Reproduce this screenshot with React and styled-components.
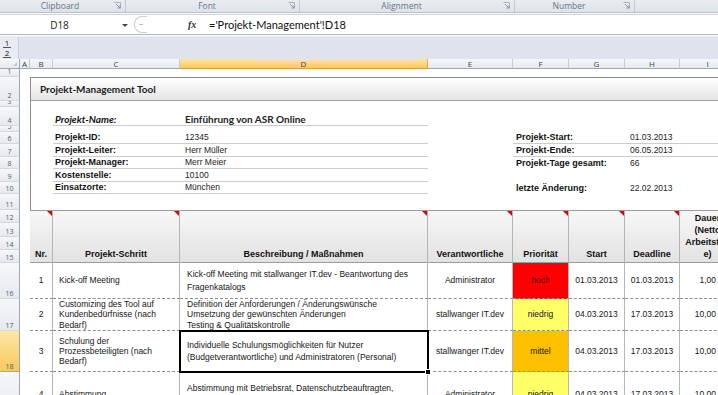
import React from 'react';
import styled, { createGlobalStyle, css } from 'styled-components';

const GlobalStyle = createGlobalStyle`
  html, body {
    margin: 0;
    padding: 0;
    background: #fff;
  }
  body {
    font-family: 'Liberation Sans', Arial, sans-serif;
    overflow: hidden;
  }
`;

const COLS = [20, 10, 23, 127, 248, 85, 56, 56, 55, 56];
const ROWS = [10, 8, 24, 6, 19, 6, 12, 13, 12, 13, 12, 16, 13, 14, 13, 13, 36, 32, 41, 46];
const LETTERS = ['A', 'B', 'C', 'D', 'E', 'F', 'G', 'H', 'I'];

const PRIO = {
  hoch: '#ff0000',
  niedrig: '#ffff66',
  mittel: '#ffc000',
};

const place = css`
  grid-column: ${(p) => p.$c};
  grid-row: ${(p) => p.$r};
`;

const Window = styled.div`
  width: 718px;
  height: 395px;
  overflow: hidden;
  display: flex;
  flex-direction: column;
  background: #fff;
`;

/* ribbon group captions */
const RibbonFoot = styled.div`
  display: flex;
  flex-shrink: 0;
  height: 12px;
  background: linear-gradient(#e9edf2, #dde3ea);
  border-bottom: 1px solid #b7bfca;
`;

const Group = styled.div`
  display: flex;
  align-items: center;
  flex-shrink: 0;
  width: ${(p) => p.$w}px;
  box-sizing: border-box;
  padding-right: 3px;
  border-right: 1px solid #c3cad4;
  font-family: 'Open Sans', sans-serif;
  font-size: 8.5px;
  color: #6a7380;
`;

const GroupLabel = styled.span`
  flex: 1;
  text-align: center;
  line-height: 12px;
  padding-left: ${(p) => p.$shift || 0}px;
`;

const Launcher = () => (
  <svg width="8" height="8" viewBox="0 0 8 8">
    <path d="M0.5 0.5h6v6" fill="none" stroke="#a9b1bc" />
    <path d="M2 2l4 4M6 3.5V6H3.5" fill="none" stroke="#8d96a2" />
  </svg>
);

/* formula bar */
const FormulaBar = styled.div`
  display: flex;
  align-items: center;
  flex-shrink: 0;
  height: 19px;
  margin-top: 1px;
  border-top: 1px solid #ccd2da;
  border-bottom: 1px solid #aeb6c2;
  background: #fff;
`;

const NameBox = styled.div`
  width: 119px;
  text-align: center;
  font-family: 'Open Sans', sans-serif;
  font-size: 10px;
  color: #222;
`;

const Arrow = styled.span`
  width: 0;
  height: 0;
  margin: 1px 6px 0 3px;
  border-left: 3px solid transparent;
  border-right: 3px solid transparent;
  border-top: 3px solid #444;
`;

const Splitter = styled.span`
  display: flex;
  align-items: center;
  justify-content: center;
  width: 12px;
  height: 15px;
  border: 1px solid #c9ced6;
  border-right: none;
  border-radius: 8px 0 0 8px;
  &::before {
    content: '';
    width: 4px;
    border-top: 1px solid #b8bec7;
  }
`;

const Fx = styled.span`
  margin-left: 41px;
  width: 20px;
  font-family: 'Liberation Serif', serif;
  font-style: italic;
  font-weight: bold;
  font-size: 10px;
  color: #333;
`;

const Formula = styled.span`
  margin-left: 1px;
  font-family: Lato, sans-serif;
  font-size: 11px;
  color: #111;
`;

/* outline band */
const OutlineBar = styled.div`
  display: flex;
  flex-shrink: 0;
  height: 22px;
  margin-top: 1px;
  background: #dfe3ed;
  border-top: 1px solid #e9ecf2;
`;

const LevelButtons = styled.div`
  display: flex;
  flex-direction: column;
  justify-content: center;
  width: 19px;
  padding-left: 3px;
  box-sizing: border-box;
  background: #e8ebf2;
  border-right: 1px solid #c9cfd9;
`;

const Level = styled.span`
  width: 8px;
  font-family: 'Open Sans', sans-serif;
  font-size: 8px;
  line-height: 9px;
  color: #1a1a1a;
  border-bottom: 1px solid #555;
  text-align: center;
`;

/* sheet grid */
const Sheet = styled.div`
  display: grid;
  grid-template-columns: ${COLS.map((c) => c + 'px').join(' ')};
  grid-template-rows: ${ROWS.map((r) => r + 'px').join(' ')};
  width: 736px;
`;

const headBg = css`
  background: ${(p) =>
    p.$active
      ? 'linear-gradient(#fde7a4, #f7c95c)'
      : 'linear-gradient(#f6f7f9, #e6e9ee)'};
`;

const Corner = styled.div`
  ${place};
  background: linear-gradient(#f6f7f9, #e6e9ee);
  border-right: 1px solid #9da7b5;
  border-bottom: 1px solid #9da7b5;
  position: relative;
  &::after {
    content: '';
    position: absolute;
    right: 2px;
    bottom: 2px;
    border-left: 4px solid transparent;
    border-bottom: 4px solid #c3c8d0;
  }
`;

const ColHead = styled.div`
  ${place};
  ${headBg};
  box-sizing: border-box;
  border-right: 1px solid ${(p) => (p.$active ? '#e2a84a' : '#c7ccd4')};
  border-bottom: 1px solid ${(p) => (p.$active ? '#e2a140' : '#9da7b5')};
  font-family: 'Open Sans', sans-serif;
  font-size: 8px;
  line-height: 9px;
  text-align: center;
  color: #3a4350;
`;

const RowHead = styled.div`
  ${place};
  ${headBg};
  display: flex;
  align-items: flex-end;
  justify-content: center;
  overflow: hidden;
  box-sizing: border-box;
  border-right: 1px solid #9da7b5;
  border-bottom: 1px solid ${(p) => (p.$active ? '#e2a140' : '#d3d8df')};
  font-family: 'Open Sans', sans-serif;
  font-size: 7px;
  line-height: 9px;
  color: #56606d;
`;

const Frame = styled.div`
  ${place};
  border-left: 1px solid #8e8e8e;
  pointer-events: none;
`;

const Band = styled.div`
  ${place};
  display: flex;
  align-items: center;
  padding-left: 10px;
  background: linear-gradient(#ffffff, #e4e4e4);
  border-top: 1px solid #8a8a8a;
  border-bottom: 1px solid #a3a3a3;
  font-family: Lato, sans-serif;
  font-weight: bold;
  font-size: 10px;
  color: #1c1c1c;
`;

const InfoLine = styled.div`
  ${place};
  display: flex;
  align-items: flex-end;
  border-bottom: ${(p) => (p.$line ? '1px solid #cdcdcd' : 'none')};
  white-space: nowrap;
`;

const InfoLabel = styled.span`
  width: ${(p) => p.$w}px;
  padding-left: ${(p) => p.$pad}px;
  flex-shrink: 0;
  font-family: ${(p) => (p.$big ? 'Lato, sans-serif' : "'Liberation Sans', Arial, sans-serif")};
  font-size: ${(p) => (p.$big ? '10px' : '9px')};
  font-weight: bold;
  font-style: ${(p) => (p.$italic ? 'italic' : 'normal')};
  line-height: 11px;
  color: #111;
`;

const InfoValue = styled.span`
  font-family: ${(p) => (p.$big ? 'Lato, sans-serif' : "'Liberation Sans', Arial, sans-serif")};
  font-size: ${(p) => (p.$big ? '10px' : '8.5px')};
  font-weight: ${(p) => (p.$big ? 'bold' : 'normal')};
  line-height: 11px;
  color: #222;
`;

const HeadCell = styled.div`
  ${place};
  position: relative;
  display: flex;
  flex-direction: column;
  justify-content: flex-end;
  align-items: center;
  padding-bottom: 2px;
  box-sizing: border-box;
  background: linear-gradient(#f7f7f7, #e2e2e2);
  border-top: 1px solid #9c9c9c;
  border-right: 1px solid #b4b4b4;
  border-bottom: 1px solid #9c9c9c;
  font-weight: bold;
  font-size: 9px;
  line-height: 12px;
  color: #111;
  text-align: center;
  white-space: nowrap;
  ${(p) =>
    p.$flag &&
    css`
      &::after {
        content: '';
        position: absolute;
        top: 0;
        right: 0;
        border-top: 5px solid #e10000;
        border-left: 5px solid transparent;
      }
    `}
`;

const Cell = styled.div`
  ${place};
  position: relative;
  display: flex;
  flex-direction: column;
  justify-content: center;
  align-items: ${(p) => p.$align || 'flex-start'};
  padding: 0 ${(p) => p.$padR || 0}px 0 ${(p) => p.$padL || 0}px;
  box-sizing: border-box;
  overflow: ${(p) => (p.$active ? 'visible' : 'hidden')};
  background: ${(p) => p.$fill || '#fff'};
  border-right: 1px solid #b7b7b7;
  border-bottom: 1px dashed #8d8d8d;
  font-size: 8.5px;
  line-height: ${(p) => (p.$lines > 2 ? '10.3px' : '12.5px')};
  color: ${(p) => (p.$fill === PRIO.hoch ? '#4a0000' : '#161616')};
  white-space: nowrap;
  ${(p) =>
    p.$active &&
    css`
      z-index: 2;
      outline: 2px solid #000;
      outline-offset: -1px;
      &::after {
        content: '';
        position: absolute;
        right: -4px;
        bottom: -4px;
        width: 4px;
        height: 4px;
        background: #000;
        border: 1px solid #fff;
      }
    `}
`;

const steps = [
  {
    nr: 1,
    step: ['Kick-off Meeting'],
    desc: ['Kick-off Meeting mit stallwanger IT.dev - Beantwortung des', 'Fragenkatalogs'],
    who: 'Administrator',
    prio: 'hoch',
    start: '01.03.2013',
    end: '01.03.2013',
    days: '1,00',
  },
  {
    nr: 2,
    step: ['Customizing des Tool auf', 'Kundenbedürfnisse (nach', 'Bedarf)'],
    desc: [
      'Definition der Anforderungen / Änderungswünsche',
      'Umsetzung der gewünschten Änderungen',
      'Testing & Qualitätskontrolle',
    ],
    who: 'stallwanger IT.dev',
    prio: 'niedrig',
    start: '04.03.2013',
    end: '17.03.2013',
    days: '10,00',
  },
  {
    nr: 3,
    step: ['Schulung der', 'Prozessbeteiligten (nach', 'Bedarf)'],
    desc: [
      'Individuelle Schulungsmöglichkeiten für Nutzer',
      '(Budgetverantwortliche) und Administratoren (Personal)',
    ],
    who: 'stallwanger IT.dev',
    prio: 'mittel',
    start: '04.03.2013',
    end: '17.03.2013',
    days: '10,00',
    active: true,
  },
  {
    nr: 4,
    step: ['Abstimmung'],
    desc: ['Abstimmung mit Betriebsrat, Datenschutzbeauftragten,', 'Personalabteilung'],
    who: 'Administrator',
    prio: 'niedrig',
    start: '04.03.2013',
    end: '17.03.2013',
    days: '10,00',
  },
];

const leftInfo = [
  { r: 7, label: 'Projekt-ID:', value: '12345' },
  { r: 8, label: 'Projekt-Leiter:', value: 'Herr Müller' },
  { r: 9, label: 'Projekt-Manager:', value: 'Merr Meier' },
  { r: 10, label: 'Kostenstelle:', value: '10100' },
  { r: 11, label: 'Einsatzorte:', value: 'München' },
];

const rightInfo = [
  { r: 7, label: 'Projekt-Start:', value: '01.03.2013', line: true },
  { r: 8, label: 'Projekt-Ende:', value: '06.05.2013', line: true },
  { r: 9, label: 'Projekt-Tage gesamt:', value: '66' },
  { r: 11, label: 'letzte Änderung:', value: '22.02.2013' },
];

const heads = [
  { c: 3, text: ['Nr.'], flag: true },
  { c: 4, text: ['Projekt-Schritt'], flag: true },
  { c: 5, text: ['Beschreibung / Maßnahmen'], flag: true },
  { c: 6, text: ['Verantwortliche'], flag: true },
  { c: 7, text: ['Priorität'], flag: true },
  { c: 8, text: ['Start'], flag: true },
  { c: 9, text: ['Deadline'], flag: true },
  { c: 10, text: ['Dauer', '(Netto', 'Arbeitstag', 'e)'] },
];

const Lines = ({ lines }) => lines.map((l, i) => <span key={i}>{l}</span>);

const App = () => {
  return (
    <Window>
      <GlobalStyle />
      <RibbonFoot>
        <Group $w={126}>
          <GroupLabel $shift={6}>Clipboard</GroupLabel>
          <Launcher />
        </Group>
        <Group $w={174}>
          <GroupLabel>Font</GroupLabel>
          <Launcher />
        </Group>
        <Group $w={215}>
          <GroupLabel>Alignment</GroupLabel>
          <Launcher />
        </Group>
        <Group $w={120}>
          <GroupLabel>Number</GroupLabel>
          <Launcher />
        </Group>
      </RibbonFoot>

      <FormulaBar>
        <NameBox>D18</NameBox>
        <Arrow />
        <Splitter />
        <Fx>fx</Fx>
        <Formula>='Projekt-Management'!D18</Formula>
      </FormulaBar>

      <OutlineBar>
        <LevelButtons>
          <Level>1</Level>
          <Level>2</Level>
        </LevelButtons>
      </OutlineBar>

      <Sheet>
        <Corner $c={1} $r={1} />
        {LETTERS.map((l, i) => (
          <ColHead key={l} $c={i + 2} $r={1} $active={l === 'D'}>
            {l}
          </ColHead>
        ))}
        {ROWS.slice(1).map((_, i) => (
          <RowHead key={i} $c={1} $r={i + 2} $active={i + 1 === 18}>
            {i + 1}
          </RowHead>
        ))}

        <Band $c="3 / 11" $r={3}>
          Projekt-Management Tool
        </Band>

        <InfoLine $c="4 / 6" $r={5} $line>
          <InfoLabel $w={130} $pad={2} $big $italic>
            Projekt-Name:
          </InfoLabel>
          <InfoValue $big>Einführung von ASR Online</InfoValue>
        </InfoLine>
        {leftInfo.map((it) => (
          <InfoLine key={it.label} $c="4 / 6" $r={it.r} $line>
            <InfoLabel $w={130} $pad={2}>
              {it.label}
            </InfoLabel>
            <InfoValue>{it.value}</InfoValue>
          </InfoLine>
        ))}
        {rightInfo.map((it) => (
          <InfoLine key={it.label} $c="7 / 11" $r={it.r} $line={it.line}>
            <InfoLabel $w={114} $pad={3}>
              {it.label}
            </InfoLabel>
            <InfoValue>{it.value}</InfoValue>
          </InfoLine>
        ))}

        {heads.map((h) => (
          <HeadCell key={h.c} $c={h.c} $r="13 / 17" $flag={h.flag}>
            <Lines lines={h.text} />
          </HeadCell>
        ))}

        {steps.map((s, i) => {
          const r = 17 + i;
          return (
            <React.Fragment key={s.nr}>
              <Cell $c={3} $r={r} $align="center">
                {s.nr}
              </Cell>
              <Cell $c={4} $r={r} $padL={6} $lines={s.step.length}>
                <Lines lines={s.step} />
              </Cell>
              <Cell $c={5} $r={r} $padL={7} $active={s.active} $lines={s.desc.length}>
                <Lines lines={s.desc} />
              </Cell>
              <Cell $c={6} $r={r} $align="center">
                {s.who}
              </Cell>
              <Cell $c={7} $r={r} $align="center" $fill={PRIO[s.prio]}>
                {s.prio}
              </Cell>
              <Cell $c={8} $r={r} $align="center">
                {s.start}
              </Cell>
              <Cell $c={9} $r={r} $align="center">
                {s.end}
              </Cell>
              <Cell $c={10} $r={r} $align="flex-end" $padR={19}>
                {s.days}
              </Cell>
            </React.Fragment>
          );
        })}

        <Frame $c="3 / 11" $r="3 / 21" />
      </Sheet>
    </Window>
  );
};

export default App;
